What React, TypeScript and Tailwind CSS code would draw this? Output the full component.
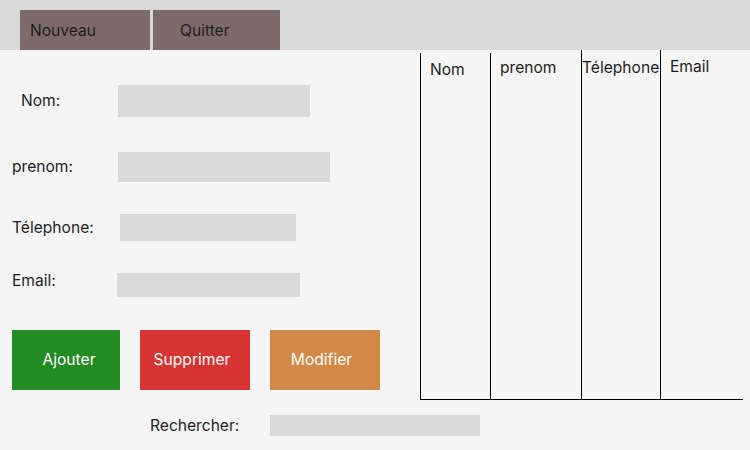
import React from 'react';

const Field = ({ label, labelClass, inputClass, rowClass }: { label: string; labelClass: string; inputClass: string; rowClass: string }) => (
    <div className={`flex items-center ${rowClass}`}>
        <span className={`shrink-0 ${labelClass}`}>{label}</span>
        <div className={`bg-[#d9d9d9] ${inputClass}`} />
    </div>
);

const App = () => {
    return (
        <div
            className="w-[750px] h-[450px] bg-[#f5f5f5] text-[15.6px] leading-[20px] text-[#1e1e1e] overflow-hidden"
            style={{ fontFamily: 'Inter, "Noto Sans", sans-serif' }}
        >
            {/* top bar */}
            <div className="h-[50px] bg-[#d9d9d9] flex items-end pl-[20px] gap-[3px]">
                <button className="w-[130px] h-[40px] bg-[#7d6b6b] text-left pl-[10px] pt-[2px]">Nouveau</button>
                <button className="w-[127px] h-[40px] bg-[#7d6b6b] text-left pl-[27px] pt-[2px]">Quitter</button>
            </div>

            <div className="flex h-[350px]">
                {/* form */}
                <div className="w-[420px] flex flex-col">
                    <Field rowClass="mt-[35px]" label="Nom:" labelClass="w-[118px] pl-[21px]" inputClass="w-[192px] h-[32px]" />
                    <Field rowClass="mt-[35px]" label="prenom:" labelClass="w-[118px] pl-[12px]" inputClass="w-[212px] h-[30px]" />
                    <Field rowClass="mt-[32px]" label="Télephone:" labelClass="w-[120px] pl-[12px]" inputClass="w-[176px] h-[27px]" />
                    <Field rowClass="mt-[32px]" label="Email:" labelClass="w-[117px] pl-[12px] -translate-y-[4px]" inputClass="w-[183px] h-[24px]" />
                    <div className="flex mt-[33px] pl-[12px] gap-[20px] text-white">
                        <button className="w-[108px] h-[60px] bg-[#228b22] pl-[6px]">Ajouter</button>
                        <button className="w-[110px] h-[60px] bg-[#d63333] pr-[6px]">Supprimer</button>
                        <button className="w-[110px] h-[60px] bg-[#d38946] pr-[7px]">Modifier</button>
                    </div>
                </div>

                {/* table */}
                <div className="w-[323px] flex border-b border-black">
                    <div className="w-[71px] mt-[3px] border-l border-r border-black pl-[9px] pt-[7px]">Nom</div>
                    <div className="w-[91px] border-r border-black pl-[9px] pt-[8px]">prenom</div>
                    <div className="w-[79px] border-r border-black pt-[8px]">Télephone</div>
                    <div className="flex-1 pl-[9px] pt-[7px]">Email</div>
                </div>
            </div>

            {/* search */}
            <div className="flex items-center mt-[15px]">
                <span className="w-[270px] pl-[150px] shrink-0">Rechercher:</span>
                <div className="w-[210px] h-[21px] bg-[#d9d9d9]" />
            </div>
        </div>
    );
};

export default App;
